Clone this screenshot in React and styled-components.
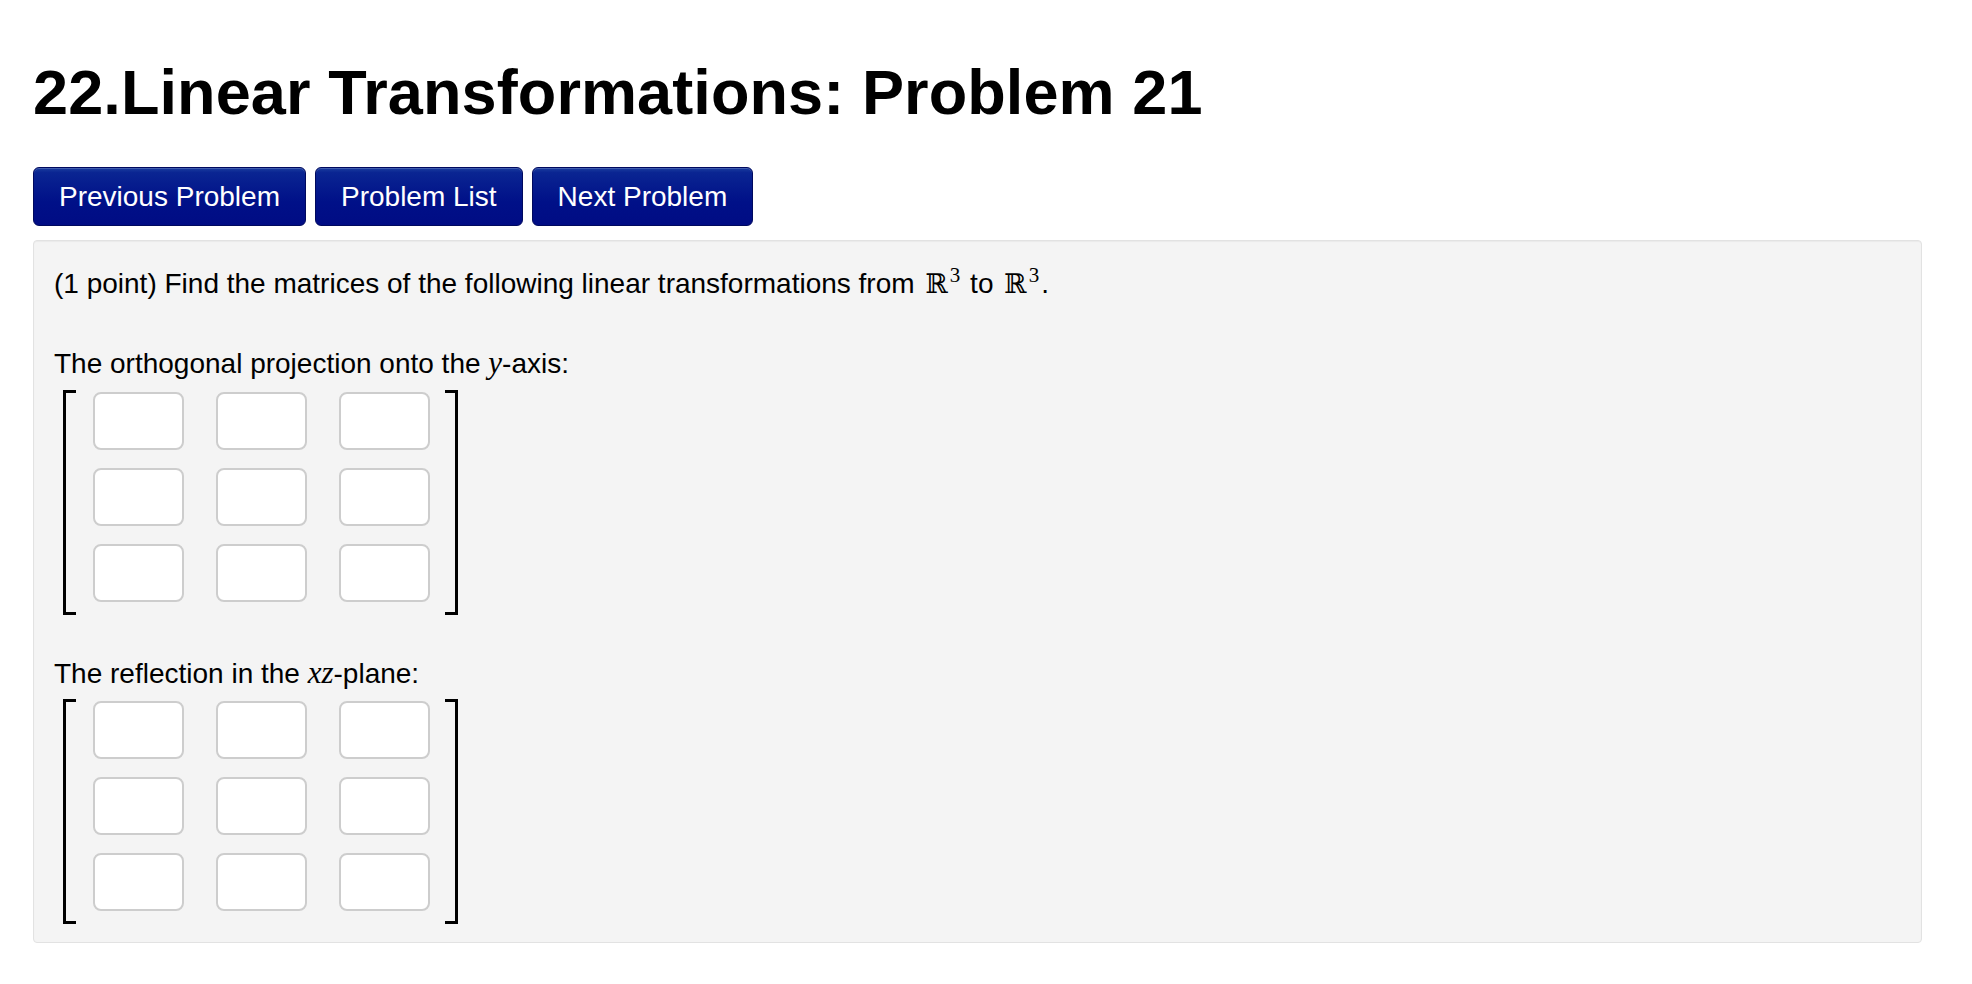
import React from 'react';
import styled, { createGlobalStyle } from 'styled-components';

const GlobalStyle = createGlobalStyle`
  body {
    margin: 0;
    background: #ffffff;
    font-family: "Liberation Sans", Helvetica, Arial, sans-serif;
    color: #000;
  }
`;

const Page = styled.div`
  padding: 56px 50px 40px 33px;
`;

const Title = styled.h1`
  margin: 0;
  font-size: 63px;
  line-height: 72px;
  font-weight: bold;
  letter-spacing: 0.1px;
`;

const NavBar = styled.div`
  display: flex;
  gap: 9px;
  margin-top: 39px;
`;

const NavButton = styled.button`
  height: 59px;
  padding: 0 25px;
  font-family: inherit;
  font-size: 28px;
  color: #fff;
  border: 1px solid #00095e;
  border-radius: 6px;
  background: linear-gradient(to bottom, #1a3d9f 0%, #0a2592 8%, #001088 60%, #000c84 100%);
  box-shadow: inset 0 1px 0 rgba(255, 255, 255, 0.18);
  cursor: pointer;
`;

const Panel = styled.div`
  margin-top: 14px;
  padding: 23px 20px 14px 20px;
  background: #f4f4f4;
  border: 1px solid #e2e2e2;
  border-radius: 4px;
  box-shadow: inset 0 1px 1px rgba(0, 0, 0, 0.04);
`;

const Text = styled.div`
  font-size: 28px;
  line-height: 40px;
  margin-top: ${(p) => p.gap || 0}px;
`;

const MathVar = styled.span`
  font-family: "Liberation Serif", "DejaVu Serif", serif;
  font-style: italic;
  font-size: 31px;
  line-height: 1;
`;

const Reals = styled.span`
  font-family: "DejaVu Serif", "Liberation Serif", serif;
  font-size: 27px;
  line-height: 1;
  margin-left: 3px;
`;

const Sup = styled.sup`
  font-family: "Liberation Serif", "DejaVu Serif", serif;
  font-size: 21px;
  vertical-align: 11px;
  line-height: 0;
  margin-left: 2px;
  margin-right: 2px;
`;

const Matrix = styled.div`
  display: inline-flex;
  align-items: stretch;
  margin: ${(p) => p.top}px 0 0 9px;
`;

const Bracket = styled.div`
  width: 13px;
  box-sizing: border-box;
  border: 3px solid #000;
  ${(p) => (p.side === 'left' ? 'border-right: none;' : 'border-left: none;')}
`;

const Grid = styled.div`
  display: grid;
  grid-template-columns: repeat(3, 91px);
  column-gap: 32px;
  row-gap: 18px;
  padding: 2px 15px 13px 17px;
`;

const Cell = styled.input`
  display: block;
  width: 91px;
  height: 58px;
  box-sizing: border-box;
  border: 2px solid #cdcdcd;
  border-radius: 8px;
  background: #fff;
  font-size: 24px;
  outline: none;
`;

const MatrixInput = ({ top }) => (
  <Matrix top={top}>
    <Bracket side="left" />
    <Grid>
      {Array.from({ length: 9 }).map((_, i) => (
        <Cell key={i} type="text" />
      ))}
    </Grid>
    <Bracket side="right" />
  </Matrix>
);

const App = () => {
  return (
    <Page>
      <GlobalStyle />
      <Title>22.Linear Transformations: Problem 21</Title>
      <NavBar>
        <NavButton>Previous Problem</NavButton>
        <NavButton>Problem List</NavButton>
        <NavButton>Next Problem</NavButton>
      </NavBar>
      <Panel>
        <Text>
          (1 point) Find the matrices of the following linear transformations from{' '}
          <Reals>ℝ</Reals>
          <Sup>3</Sup> to <Reals>ℝ</Reals>
          <Sup>3</Sup>.
        </Text>
        <Text gap={40}>
          The orthogonal projection onto the <MathVar>y</MathVar>-axis:
        </Text>
        <MatrixInput top={6} />
        <Text gap={35}>
          The reflection in the <MathVar>xz</MathVar>-plane:
        </Text>
        <MatrixInput top={5} />
      </Panel>
    </Page>
  );
};

export default App;
